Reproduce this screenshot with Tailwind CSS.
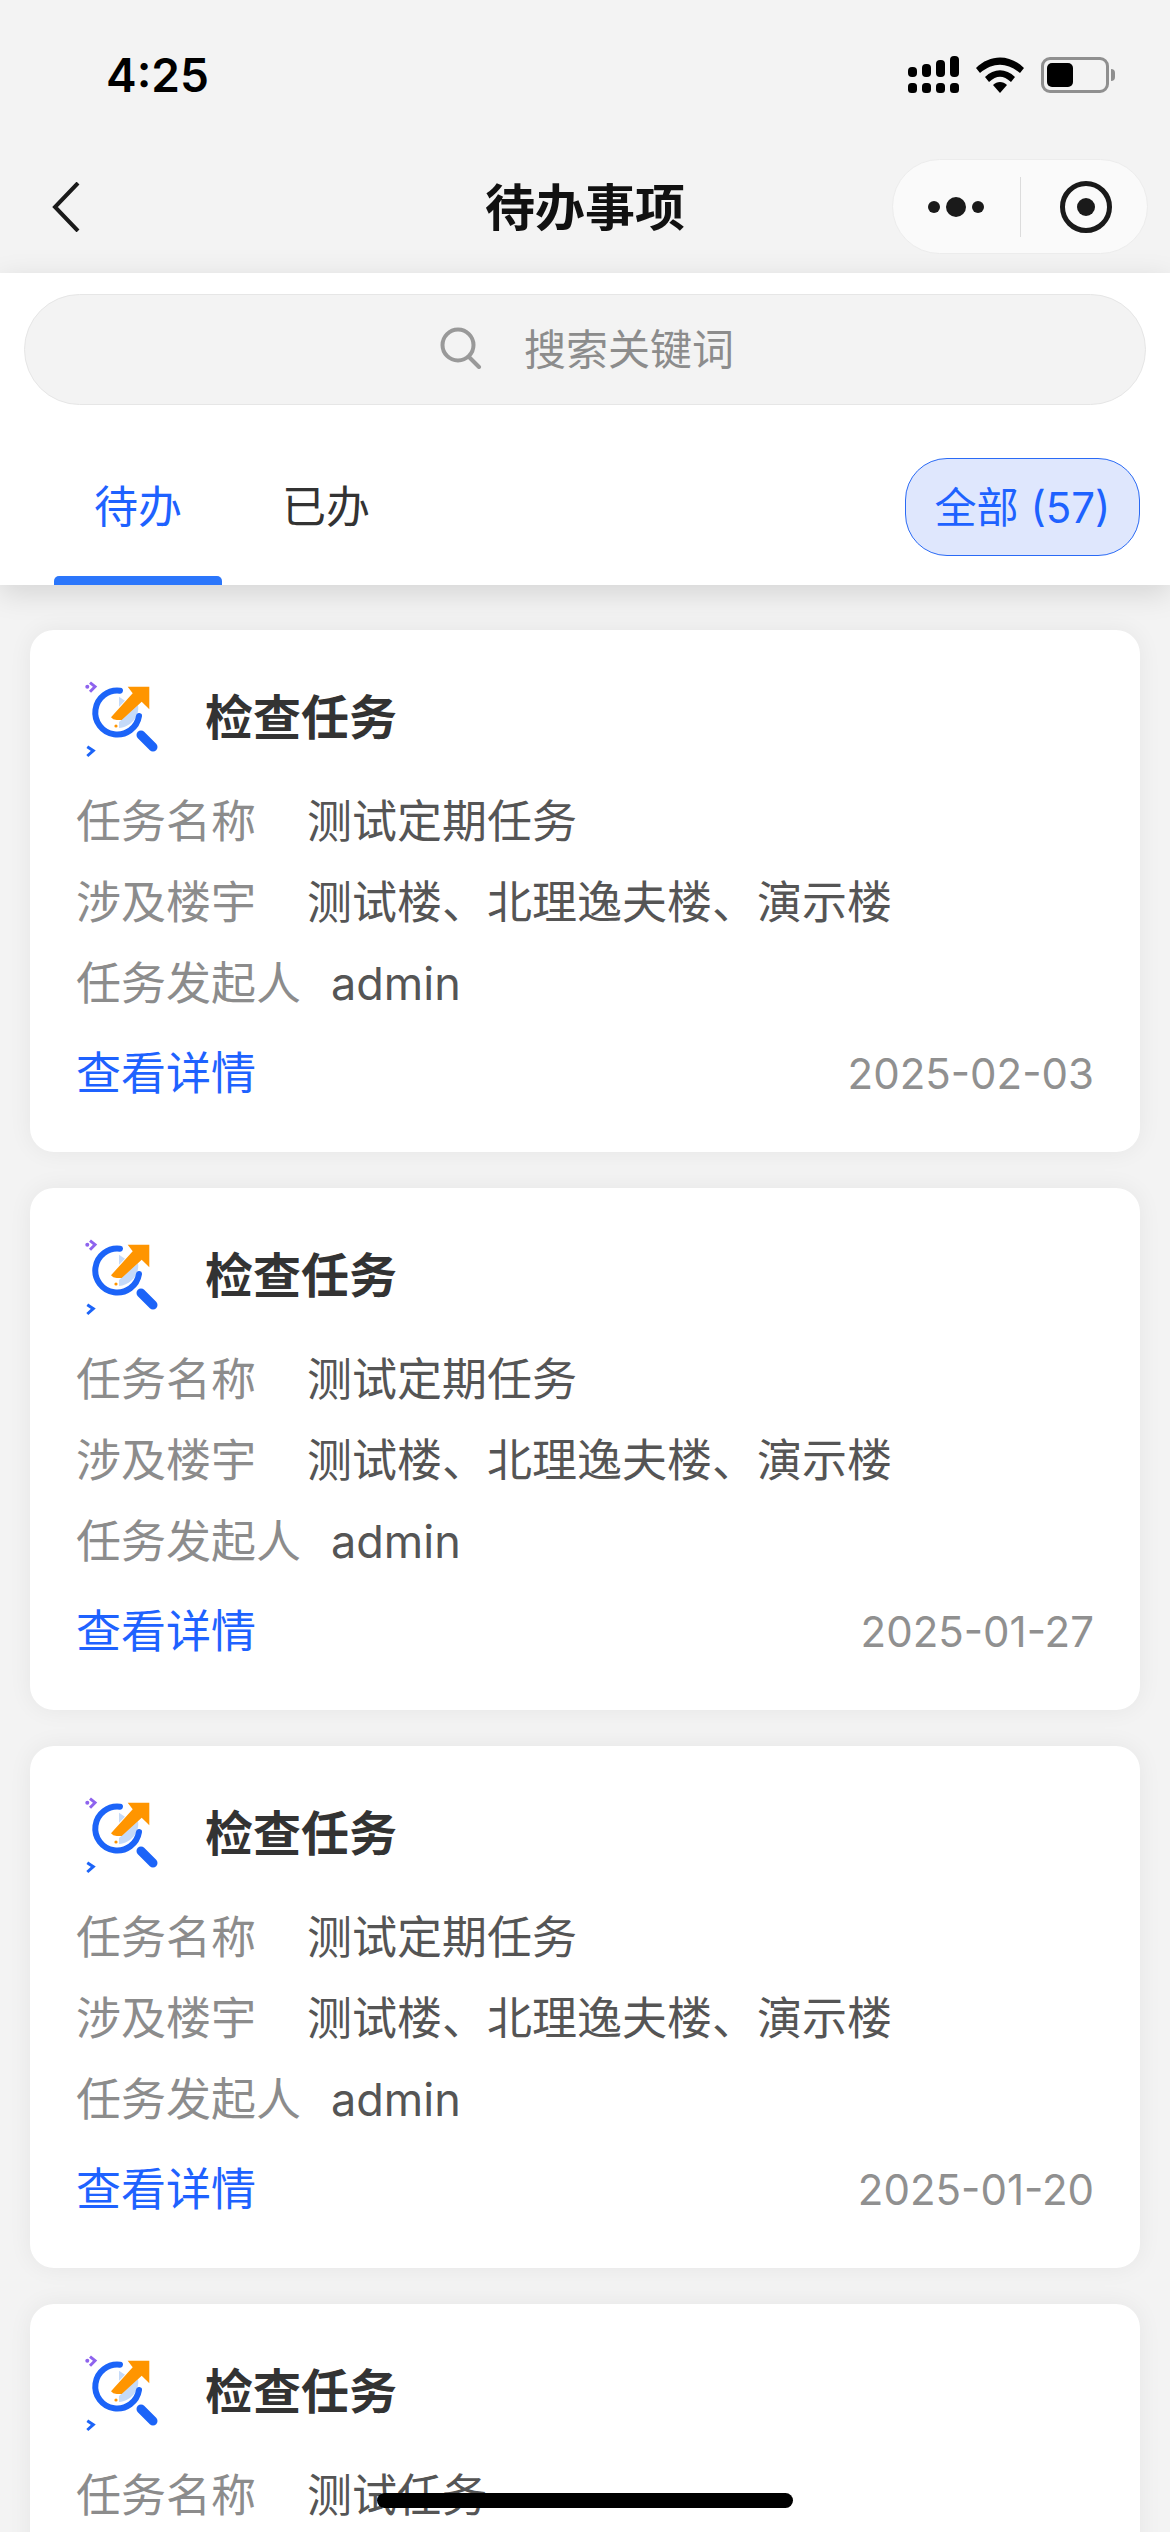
<!DOCTYPE html>
<html lang="zh-CN">

    <head>
        <meta charset="UTF-8">
        <meta name="viewport" content="width=device-width, initial-scale=1.0">
        <script src="https://cdn.jsdelivr.net/npm/@tailwindcss/browser@4"></script>
        <title>待办事项</title>
    </head>

    <body class="bg-[#f3f3f3]">
        <!-- shared card logo, coordinates are page px of the first card -->
        <svg class="hidden">
            <symbol id="logo" viewBox="76 678 90 80">
                <path d="M119 696.700 L125 700.700 L119 706.700 Z" fill="#c5daf8"/>
                <path d="M119 728 L119 722 L138 705 C140 716 131 727 119 728 Z" fill="#c5daf8"/>
                <path d="M120 690.700 A22 22 0 1 0 139 716" fill="none" stroke="#1c64f8" stroke-width="6" stroke-linecap="round"/>
                <path d="M141 735 L153 747" fill="none" stroke="#1c64f8" stroke-width="9" stroke-linecap="round"/>
                <path d="M127.700 686.700 L149.300 686.700 L149.300 709.300 L141.700 701.700 L121.700 720 L116.700 720 L113.300 719.300 L111 717.300 L132.700 693.300 Z" fill="#ff9500"/>
                <circle cx="116" cy="726" r="1.600" fill="#ff9500"/>
                <path d="M90 682.700 L95 686.700 L90 691.700" fill="none" stroke="#8e63ee" stroke-width="3"/>
                <circle cx="87.300" cy="686.700" r="2" fill="#8e63ee"/>
                <path d="M87.300 746.700 L93.300 750.700 L87.300 756" fill="none" stroke="#1c64f8" stroke-width="3"/>
            </symbol>
        </svg>

        <div class="relative w-[1170px] h-[2532px] overflow-hidden font-['Inter','Noto_Sans_CJK_SC',sans-serif]">
            <header class="bg-[#f3f3f3] h-[273px]">
                <div class="h-[159px] pt-[48px] pl-[106px] pr-[55px] flex justify-between items-start">
                    <span class="text-[46px] leading-[54px] font-semibold text-black">4:25</span>
                    <div class="flex items-center gap-[17px] mt-[8px]">
                        <svg width="51" height="37" viewBox="0 0 51 37" fill="#000">
                            <rect x="0" y="11" width="9" height="10" rx="4"/>
                            <rect x="14" y="8" width="9" height="13" rx="4"/>
                            <rect x="28" y="4" width="9" height="17" rx="4"/>
                            <rect x="42" y="0" width="9" height="21" rx="4"/>
                            <rect x="0" y="27" width="9" height="10" rx="3.500"/>
                            <rect x="14" y="27" width="9" height="10" rx="3.500"/>
                            <rect x="28" y="27" width="9" height="10" rx="3.500"/>
                            <rect x="42" y="27" width="9" height="10" rx="3.500"/>
                        </svg>
                        <svg width="48" height="36" viewBox="0 0 48 36" fill="#000">
                            <path d="M0 11 C14 -3 34 -3 48 11 L44 16 C31 5 17 5 4 16 Z"/>
                            <path d="M9 20 C18 11 30 11 39 20 L35 25 C27 18 21 18 13 25 Z"/>
                            <path d="M17 28 C21 24 27 24 31 28 L24 36 Z"/>
                        </svg>
                        <div class="flex items-center gap-[2px]">
                            <div class="w-[68px] h-[36px] border-[3px] border-[#8f8f8f] rounded-[9px] p-[3px]">
                                <div class="w-[26px] h-full bg-black rounded-[5px]"></div>
                            </div>
                            <div class="w-[4px] h-[12px] bg-[#8f8f8f] rounded-r-full"></div>
                        </div>
                    </div>
                </div>
                <div class="h-[95px] px-[22px] grid grid-cols-[1fr_auto_1fr] items-center">
                    <svg class="ml-[30px]" width="28" height="50" viewBox="0 0 28 50" fill="none" stroke="#1a1a1a" stroke-width="4">
                        <path d="M26 1 L3 25 L26 49"/>
                    </svg>
                    <h1 class="text-[50px] leading-[60px] font-semibold text-[#111] mt-[3px]">待办事项</h1>
                    <div class="justify-self-end w-[256px] h-[95px] bg-[#fafafa] border border-[#ececec] rounded-full flex items-center">
                        <div class="w-[127px] flex justify-end items-center gap-[6px] pr-[36px]">
                            <span class="w-[12px] h-[12px] rounded-full bg-[#1a1a1a]"></span>
                            <span class="w-[20px] h-[20px] rounded-full bg-[#1a1a1a]"></span>
                            <span class="w-[12px] h-[12px] rounded-full bg-[#1a1a1a]"></span>
                        </div>
                        <div class="w-px h-[60px] bg-[#dcdcdc]"></div>
                        <div class="flex-1 flex justify-center pl-[3px]">
                            <div class="w-[52px] h-[52px] rounded-full border-[5px] border-[#1a1a1a] flex items-center justify-center">
                                <span class="w-[18px] h-[18px] rounded-full bg-[#1a1a1a]"></span>
                            </div>
                        </div>
                    </div>
                </div>
            </header>

            <div class="relative z-10 bg-white h-[312px] shadow-[0_8px_28px_rgba(0,0,0,0.13)]">
                <div class="pt-[21px] px-[24px]">
                    <div class="h-[111px] bg-[#f3f3f3] border border-[#e6e6e6] rounded-full flex items-center justify-center gap-[42px] pl-[4px] text-[42px] text-[#8c8c8c]">
                        <svg class="mb-[4px]" width="42" height="42" viewBox="0 0 42 42" fill="none" stroke="#999" stroke-width="4" stroke-linecap="round">
                            <circle cx="18" cy="18" r="15.500"/>
                            <path d="M29 30 L39 40"/>
                        </svg>
                        <span>搜索关键词</span>
                    </div>
                </div>
                <div class="mt-[53px] pl-[54px] pr-[30px] flex justify-between items-start">
                    <div class="flex gap-[60px] text-[44px] leading-[98px]">
                        <div class="relative w-[168px] h-[127px] text-center text-[#1e62ff]">
                            待办
                            <div class="absolute left-0 bottom-0 w-[168px] h-[9px] bg-[#2b76fb] rounded-t-[5px]"></div>
                        </div>
                        <div class="text-[#333]">已办</div>
                    </div>
                    <div class="w-[235px] h-[98px] bg-[#dfe7fd] border-[1.5px] border-[#2a6af5] rounded-[42px] flex items-center justify-center text-[42px] text-[#1e62ff]">全部 (57)</div>
                </div>
            </div>

            <main class="px-[30px] pt-[45px] flex flex-col gap-[36px]">
                <section class="h-[522px] shrink-0 bg-white rounded-[24px] px-[46px] pt-[48px] shadow-[0_0_24px_rgba(0,0,0,0.06)]">
                    <div class="flex items-center h-[80px]">
                        <svg class="w-[90px] h-[80px] mr-[39px]"><use href="#logo"/></svg>
                        <h2 class="text-[48px] font-bold text-[#333] mb-[1px]">检查任务</h2>
                    </div>
                    <div class="mt-[23px] text-[45px] leading-[81px] text-[#555]">
                        <div class="flex"><span class="min-w-[201px] mr-[30px] text-[#8c8c8c]">任务名称</span><span>测试定期任务</span></div>
                        <div class="flex"><span class="min-w-[201px] mr-[30px] text-[#8c8c8c]">涉及楼宇</span><span>测试楼、北理逸夫楼、演示楼</span></div>
                        <div class="flex"><span class="min-w-[201px] mr-[30px] text-[#8c8c8c]">任务发起人</span><span>admin</span></div>
                    </div>
                    <div class="mt-[10px] h-[80px] flex justify-between items-center">
                        <span class="text-[45px] text-[#1e62ff]">查看详情</span>
                        <span class="text-[42px] text-[#909090] mb-[2px]">2025-02-03</span>
                    </div>
                </section>

                <section class="h-[522px] shrink-0 bg-white rounded-[24px] px-[46px] pt-[48px] shadow-[0_0_24px_rgba(0,0,0,0.06)]">
                    <div class="flex items-center h-[80px]">
                        <svg class="w-[90px] h-[80px] mr-[39px]"><use href="#logo"/></svg>
                        <h2 class="text-[48px] font-bold text-[#333] mb-[1px]">检查任务</h2>
                    </div>
                    <div class="mt-[23px] text-[45px] leading-[81px] text-[#555]">
                        <div class="flex"><span class="min-w-[201px] mr-[30px] text-[#8c8c8c]">任务名称</span><span>测试定期任务</span></div>
                        <div class="flex"><span class="min-w-[201px] mr-[30px] text-[#8c8c8c]">涉及楼宇</span><span>测试楼、北理逸夫楼、演示楼</span></div>
                        <div class="flex"><span class="min-w-[201px] mr-[30px] text-[#8c8c8c]">任务发起人</span><span>admin</span></div>
                    </div>
                    <div class="mt-[10px] h-[80px] flex justify-between items-center">
                        <span class="text-[45px] text-[#1e62ff]">查看详情</span>
                        <span class="text-[42px] text-[#909090] mb-[2px]">2025-01-27</span>
                    </div>
                </section>

                <section class="h-[522px] shrink-0 bg-white rounded-[24px] px-[46px] pt-[48px] shadow-[0_0_24px_rgba(0,0,0,0.06)]">
                    <div class="flex items-center h-[80px]">
                        <svg class="w-[90px] h-[80px] mr-[39px]"><use href="#logo"/></svg>
                        <h2 class="text-[48px] font-bold text-[#333] mb-[1px]">检查任务</h2>
                    </div>
                    <div class="mt-[23px] text-[45px] leading-[81px] text-[#555]">
                        <div class="flex"><span class="min-w-[201px] mr-[30px] text-[#8c8c8c]">任务名称</span><span>测试定期任务</span></div>
                        <div class="flex"><span class="min-w-[201px] mr-[30px] text-[#8c8c8c]">涉及楼宇</span><span>测试楼、北理逸夫楼、演示楼</span></div>
                        <div class="flex"><span class="min-w-[201px] mr-[30px] text-[#8c8c8c]">任务发起人</span><span>admin</span></div>
                    </div>
                    <div class="mt-[10px] h-[80px] flex justify-between items-center">
                        <span class="text-[45px] text-[#1e62ff]">查看详情</span>
                        <span class="text-[42px] text-[#909090] mb-[2px]">2025-01-20</span>
                    </div>
                </section>

                <section class="h-[522px] shrink-0 bg-white rounded-[24px] px-[46px] pt-[48px] shadow-[0_0_24px_rgba(0,0,0,0.06)]">
                    <div class="flex items-center h-[80px]">
                        <svg class="w-[90px] h-[80px] mr-[39px]"><use href="#logo"/></svg>
                        <h2 class="text-[48px] font-bold text-[#333] mb-[1px]">检查任务</h2>
                    </div>
                    <div class="mt-[23px] text-[45px] leading-[81px] text-[#555]">
                        <div class="flex"><span class="min-w-[201px] mr-[30px] text-[#8c8c8c]">任务名称</span><span>测试任务</span></div>
                    </div>
                </section>
            </main>

            <div class="absolute left-[377px] top-[2493px] w-[416px] h-[15px] bg-black rounded-full"></div>
        </div>
    </body>

</html>
